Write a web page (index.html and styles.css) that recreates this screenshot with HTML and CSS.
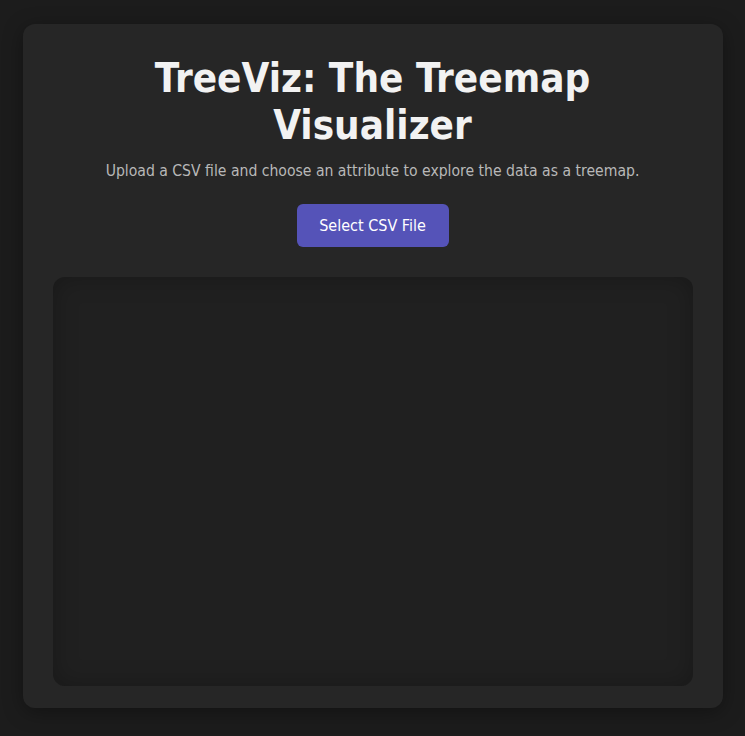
FILE: index.html
```html
<!DOCTYPE html>
<html lang="en">
<head>
<meta charset="utf-8">
<title>TreeViz</title>
<link rel="stylesheet" href="styles.css">
</head>
<body>
<main class="card">
  <h1 class="title">TreeViz: The Treemap Visualizer</h1>
  <p class="subtitle">Upload a CSV file and choose an attribute to explore the data as a treemap.</p>
  <div class="actions">
    <button class="btn" type="button">Select CSV File</button>
  </div>
  <div class="treemap"></div>
</main>
</body>
</html>
```

FILE: styles.css
```css
html, body {
  margin: 0;
  padding: 0;
}
body {
  background: #1c1c1c;
  font-family: "DejaVu Sans Condensed", "DejaVu Sans", sans-serif;
  color: #f2f2f2;
  padding: 24px 22px 28px;
}
.card {
  max-width: 640px;
  margin: 0 auto;
  background: #262626;
  border-radius: 12px;
  padding: 31px 30px 22px;
  box-shadow: 0 4px 20px rgba(0, 0, 0, 0.35);
  display: flex;
  flex-direction: column;
  align-items: center;
}
.title {
  margin: 0;
  width: 460px;
  text-align: center;
  font-size: 40px;
  line-height: 47px;
  font-weight: bold;
  color: #f2f2f2;
}
.subtitle {
  margin: 12px 0 0;
  font-size: 15.6px;
  line-height: 20px;
  color: #b8b8b8;
  text-align: center;
}
.actions {
  margin-top: 23px;
}
.btn {
  width: 152px;
  height: 43px;
  border: none;
  border-radius: 6px;
  background: #5553b8;
  color: #ffffff;
  font-family: inherit;
  font-size: 16px;
}
.treemap {
  align-self: stretch;
  margin-top: 30px;
  height: 409px;
  background: #202020;
  border-radius: 12px;
  box-shadow: inset 0 0 24px rgba(0, 0, 0, 0.25);
}
```
